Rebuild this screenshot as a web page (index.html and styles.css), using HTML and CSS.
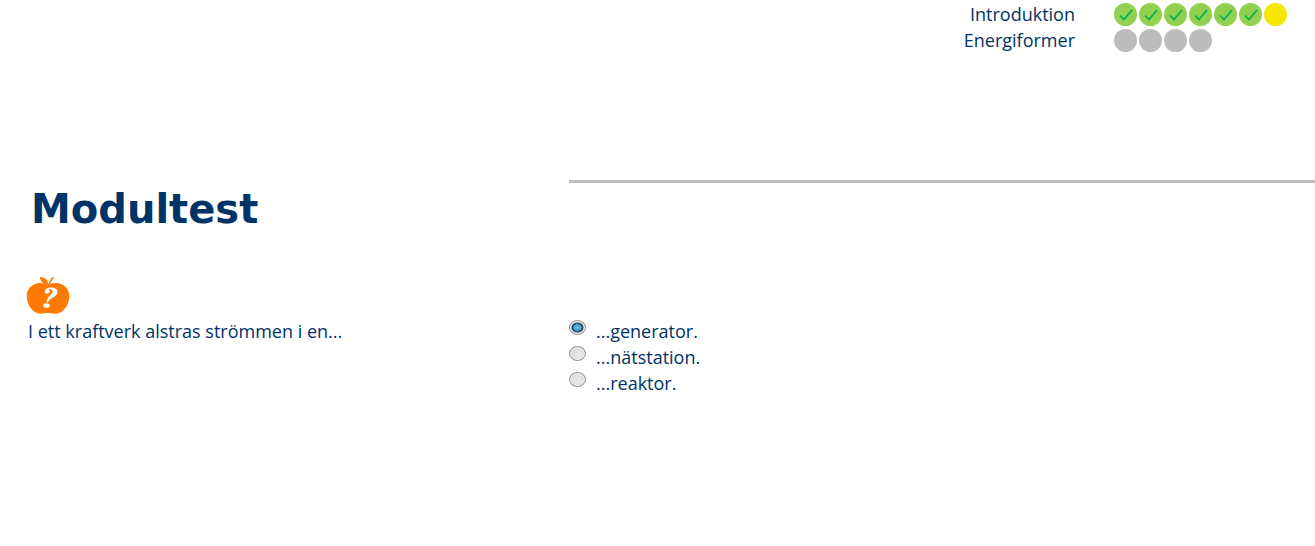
FILE: index.html
```
<!DOCTYPE html>
<html lang="sv">
<head>
<meta charset="utf-8">
<title>Modultest</title>
<link rel="stylesheet" href="styles.css">
</head>
<body>
<svg class="defs" aria-hidden="true">
  <symbol id="check" viewBox="0 0 23 23"><path d="M6 12.5 10 16.5 18 7" fill="none" stroke="#00b050" stroke-width="1.700"/></symbol>
</svg>
<header class="progress">
  <div class="module">
    <span class="module-name">Introduktion</span>
    <div class="dots">
      <span class="dot done"><svg><use href="#check"/></svg></span>
      <span class="dot done"><svg><use href="#check"/></svg></span>
      <span class="dot done"><svg><use href="#check"/></svg></span>
      <span class="dot done"><svg><use href="#check"/></svg></span>
      <span class="dot done"><svg><use href="#check"/></svg></span>
      <span class="dot done"><svg><use href="#check"/></svg></span>
      <span class="dot current"></span>
    </div>
  </div>
  <div class="module">
    <span class="module-name">Energiformer</span>
    <div class="dots">
      <span class="dot"></span>
      <span class="dot"></span>
      <span class="dot"></span>
      <span class="dot"></span>
    </div>
  </div>
</header>
<main class="test">
  <section class="question">
    <h1>Modultest</h1>
    <svg class="apple" viewBox="0 0 44 38" aria-hidden="true">
      <path fill="#ff7a00" d="M22 9C26 7 32 6 37 9C42 12 44 17 43 23C42 31 36 37 31 37.500C27 38 25 37 22 37C19 37 17 38 13 37.500C8 37 2 31 1 23C0 17 2 12 7 9C12 6 18 7 22 9Z"/>
      <path fill="#ff7a00" d="M21.500 9C17 8 14 5 14 1C19 1 22 4 22 8ZM21.500 9 26 1 28 1.500 23 9Z"/>
      <path fill="#fff" d="M19 17C18 13.500 21 11.500 25 11.500C29 11.500 31.500 13 31.500 16C31.500 19 29 20.500 26 22C23.500 23.300 22.500 24.500 22 26.500H20.500C20.500 24 21.500 22 23.500 20C25.500 18 26.500 17 26.500 15.500C26.500 14 25.500 13 24.200 13C23.200 13 23 13.500 23.500 14.500C24 16 23 17.500 21.500 17.500C20 17.500 19.300 17.800 19 17Z"/>
      <ellipse cx="20.500" cy="29.500" rx="3.200" ry="2.300" fill="#fff"/>
    </svg>
    <p>I ett kraftverk alstras strömmen i en...</p>
  </section>
  <section class="answers" aria-label="Svarsalternativ">
    <label class="answer"><input type="radio" name="answer" checked><span>...generator.</span></label>
    <label class="answer"><input type="radio" name="answer"><span>...nätstation.</span></label>
    <label class="answer"><input type="radio" name="answer"><span>...reaktor.</span></label>
  </section>
</main>
</body>
</html>
```
FILE: styles.css
```
* {
  box-sizing: border-box;
}

body {
  margin: 0;
  background: #fff;
  color: #003366;
  font: 18px/26px "Open Sans", sans-serif;
}

.defs {
  display: block;
  width: 0;
  height: 0;
}

.progress {
  display: flex;
  flex-direction: column;
  align-items: flex-end;
  padding: 1px 28px 0 0;
}

.module {
  display: grid;
  grid-template-columns: 1fr 173px;
  column-gap: 39px;
  align-items: center;
}

.module-name {
  text-align: right;
}

.dots {
  display: flex;
  gap: 2px;
}

.dot {
  width: 23px;
  height: 23px;
  border-radius: 50%;
  background: #bcbcbc;
}

.dot svg {
  display: block;
  width: 23px;
  height: 23px;
}

.done {
  background: #92d050;
}

.current {
  background: #f5e600;
}

.test {
  display: grid;
  grid-template-columns: 569px 1fr;
  margin-top: 127px;
}

.question {
  padding: 5px 28px 0;
}

h1 {
  margin: 0 0 0 3px;
  font: bold 40px/48px "DejaVu Sans", sans-serif;
}

.apple {
  display: block;
  width: 44px;
  height: 38px;
  margin: 43px 0 0 -2px;
}

.question p {
  margin: 4px 0 0;
}

.answers {
  border-top: 3px solid #bcbcbc;
  padding-top: 135px;
}

.answer {
  display: flex;
  align-items: flex-start;
  gap: 10px;
}

.answer input {
  appearance: none;
  width: 17px;
  height: 15px;
  margin: 2px 0 0;
  border: 1px solid #969696;
  border-radius: 50%;
  background: radial-gradient(ellipse at 60% 60%, #ececec, #d2d2d2);
  box-shadow: inset 0 0 0 1px #f4f4f4;
}

.answer input:checked {
  background: radial-gradient(6px 5px at 50% 50%, #79c5ef 0, #3f94c8 65%, #173852 90%, #e4e4e4 110%);
}
```
